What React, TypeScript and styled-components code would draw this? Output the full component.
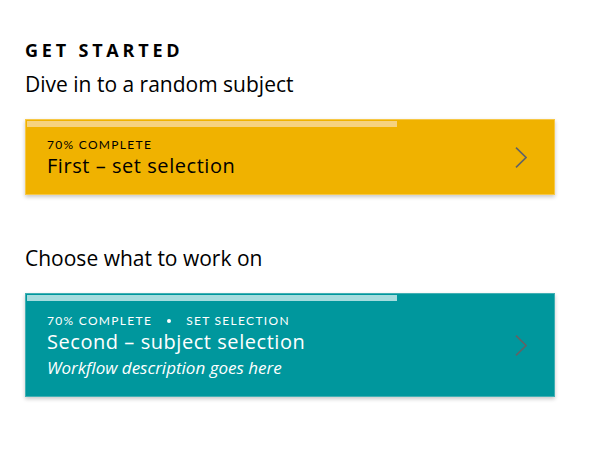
import styled, { createGlobalStyle } from "styled-components";

const GlobalStyle = createGlobalStyle`
  body {
    margin: 0;
    background: #fff;
    font-family: "Open Sans", "Noto Sans", sans-serif;
    color: #000;
  }
`;

const Page = styled.div`
  padding: 40px 25px 0 25px;
  width: 530px;
`;

const Section = styled.section`
  display: flex;
  flex-direction: column;
  margin-bottom: 50px;
`;

const Heading = styled.h2`
  margin: 0 0 11px 0;
  font-size: 18px;
  font-weight: 700;
  letter-spacing: 3.8px;
  line-height: 20px;
`;

const Lead = styled.p`
  margin: 0 0 22px 0;
  font-size: 21px;
  line-height: 26px;
  font-weight: 400;
`;

const Card = styled.a<{ $bg: string; $edge: string; $fg: string }>`
  position: relative;
  display: flex;
  align-items: center;
  justify-content: space-between;
  background: ${(p) => p.$bg};
  border: 1px solid ${(p) => p.$edge};
  color: ${(p) => p.$fg};
  box-shadow: 0 2px 4px rgba(0, 0, 0, 0.22);
  text-decoration: none;
  box-sizing: border-box;
  width: 530px;
`;

const Progress = styled.div<{ $tone: string }>`
  position: absolute;
  left: 1px;
  top: 1px;
  height: 6px;
  background: ${(p) => p.$tone};
`;

const Body = styled.div<{ $pad: string }>`
  display: flex;
  flex-direction: column;
  padding: ${(p) => p.$pad};
`;

const Meta = styled.div`
  display: flex;
  align-items: center;
  gap: 10px;
  font-family: Lato, "Open Sans", sans-serif;
  font-size: 12px;
  letter-spacing: 1.3px;
  line-height: 14px;
  text-transform: uppercase;
`;

const Dot = styled.span`
  width: 4px;
  height: 4px;
  border-radius: 50%;
  background: currentColor;
  margin: 0 5px;
`;

const Title = styled.div`
  font-size: 20px;
  line-height: 28px;
  letter-spacing: 0.55px;
`;

const Desc = styled.div`
  font-size: 17px;
  font-style: italic;
  line-height: 22px;
  margin-top: 1px;
`;

const Chevron = styled.svg`
  flex: none;
  margin-right: 27px;
`;

const Arrow = () => (
  <Chevron width="12" height="21" viewBox="0 0 12 21" fill="none">
    <path d="M1 0.6 L11 10.5 L1 20.4" stroke="#616366" strokeWidth="1.6" />
  </Chevron>
);

export default function App() {
  return (
    <>
      <GlobalStyle />
      <Page>
        <Section>
          <Heading>GET STARTED</Heading>
          <Lead>Dive in to a random subject</Lead>
          <Card href="#" $bg="#f0b200" $edge="#f7c847" $fg="#000">
            <Progress $tone="#f6d27f" style={{ width: `${0.7 * 528}px` }} />
            <Body $pad="17.5px 21px 14.5px 21px">
              <Meta>70% Complete</Meta>
              <Title>First – set selection</Title>
            </Body>
            <Arrow />
          </Card>
        </Section>
        <Section>
          <Lead>Choose what to work on</Lead>
          <Card href="#" $bg="#00979d" $edge="#42b0b4" $fg="#fff">
            <Progress $tone="#a6dcde" style={{ width: `${0.7 * 528}px` }} />
            <Body $pad="20px 21px 17px 21px">
              <Meta>
                70% Complete <Dot /> Set selection
              </Meta>
              <Title>Second – subject selection</Title>
              <Desc>Workflow description goes here</Desc>
            </Body>
            <Arrow />
          </Card>
        </Section>
      </Page>
    </>
  );
}
